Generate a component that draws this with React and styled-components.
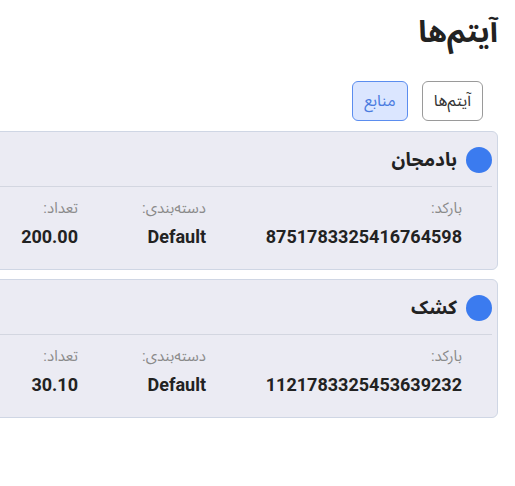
import React from 'react';
import styled, { createGlobalStyle } from 'styled-components';

const Global = createGlobalStyle`
  html, body {
    margin: 0;
    padding: 0;
    background: #ffffff;
    overflow: hidden;
  }
  body {
    direction: rtl;
    font-family: Roboto, "Noto Sans Arabic", "Noto Naskh Arabic", "Noto Sans", "DejaVu Sans", sans-serif;
    color: #222;
  }
`

const Page = styled.div`
  padding: 14px 17px 20px 0;
  display: flex;
  flex-direction: column;
  align-items: flex-start;
`

const Title = styled.h1`
  margin: 0;
  font-size: 30px;
  font-weight: 700;
  line-height: 36px;
  color: #222;
`

const Tabs = styled.div`
  display: flex;
  gap: 14px;
  margin: 31px 15px 10px 0;
`

const Tab = styled.button`
  height: 40px;
  padding: 0 11px;
  border-radius: 6px;
  font-family: inherit;
  font-size: 16px;
  cursor: pointer;
  border: 1px solid ${p => (p.$active ? '#5b8def' : '#9a9a9a')};
  background: ${p => (p.$active ? '#dbe6ff' : '#ffffff')};
  color: ${p => (p.$active ? '#4a7be0' : '#333')};
`

const List = styled.div`
  display: flex;
  flex-direction: column;
  gap: 9px;
`

const Card = styled.div`
  width: 640px;
  background: #ebebf3;
  border: 1px solid #cfd6e4;
  border-radius: 6px;
  box-sizing: border-box;
`

const Head = styled.div`
  display: flex;
  align-items: center;
  gap: 9px;
  margin: 0 5px;
  padding: 15px 0 13px;
  border-bottom: 1px solid #d3d6e0;
`

const Dot = styled.span`
  width: 26px;
  height: 26px;
  border-radius: 50%;
  background: #3b7bef;
  flex: none;
`

const Name = styled.h2`
  margin: 0;
  font-size: 19px;
  font-weight: 700;
  line-height: 26px;
  color: #222;
`

const Fields = styled.div`
  display: grid;
  grid-template-columns: 256px 128px 128px;
  padding: 11px 35px 20px 0;
`

const Field = styled.div`
  display: flex;
  flex-direction: column;
  gap: 7px;
`

const Label = styled.span`
  font-size: 15px;
  color: #8a8a8a;
  line-height: 20px;
`

const Value = styled.span`
  font-size: 18px;
  font-weight: 700;
  color: #222;
  line-height: 24px;
`

const items = [
  { name: 'بادمجان', barcode: '8751783325416764598', category: 'Default', count: '200.00' },
  { name: 'کشک', barcode: '1121783325453639232', category: 'Default', count: '30.10' },
];

export default function App() {
  return (
    <>
      <Global />
      <Page>
        <Title>آیتم‌ها</Title>
        <Tabs>
          <Tab>آیتم‌ها</Tab>
          <Tab $active>منابع</Tab>
        </Tabs>
        <List>
          {items.map(item => (
            <Card key={item.barcode}>
              <Head>
                <Dot />
                <Name>{item.name}</Name>
              </Head>
              <Fields>
                <Field>
                  <Label>بارکد:</Label>
                  <Value>{item.barcode}</Value>
                </Field>
                <Field>
                  <Label>دسته‌بندی:</Label>
                  <Value>{item.category}</Value>
                </Field>
                <Field>
                  <Label>تعداد:</Label>
                  <Value>{item.count}</Value>
                </Field>
              </Fields>
            </Card>
          ))}
        </List>
      </Page>
    </>
  );
}
